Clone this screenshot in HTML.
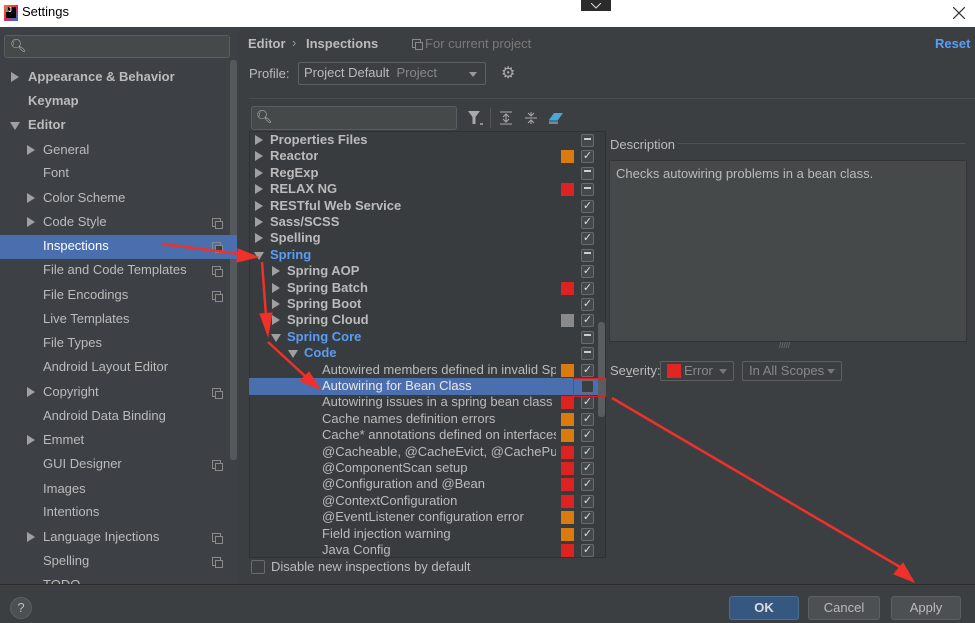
<!DOCTYPE html>
<html><head><meta charset="utf-8"><style>
*{margin:0;padding:0;box-sizing:border-box}
body{width:975px;height:623px;overflow:hidden;background:#3c3f41;font-family:"Segoe UI","Liberation Sans",sans-serif;font-size:13px;color:#bbbbbb;position:relative}
.a{position:absolute;white-space:nowrap}
.tri{position:absolute;width:0;height:0;border-top:5px solid transparent;border-bottom:5px solid transparent;border-left:8px solid #a0a0a0}
.tridn{position:absolute;width:0;height:0;border-left:5px solid transparent;border-right:5px solid transparent;border-top:8px solid #a0a0a0}
.cb{position:absolute;width:13px;height:13px;border:1px solid #6b6b6b;background:#43494a;border-radius:2px;color:#ddd;font-size:11px;line-height:11px;text-align:center}
.sq{position:absolute;width:13px;height:13px}
.cp{position:absolute;width:9px;height:9px;border:1px solid #8a8a8a}
.cp:after{content:"";position:absolute;left:2px;top:2px;width:6px;height:6px;border:1px solid #8a8a8a;background:#3c3f41}
.btn{position:absolute;height:24px;border:1px solid #5e6060;background:#4c5052;border-radius:3px;text-align:center;line-height:22px;color:#bbb}
</style></head><body>
<!-- title bar -->
<div class="a" style="left:0;top:0;width:975px;height:27px;background:#fff"></div>
<div class="a" style="left:4px;top:5px;width:14px;height:16px;background:linear-gradient(135deg,#f97a12,#e5294f 50%,#087cfa);"></div>
<div class="a" style="left:6px;top:7px;width:10px;height:11px;background:#000;color:#fff;font-size:7px;font-weight:bold;line-height:8px">IJ</div>
<div class="a" style="left:22px;top:4px;color:#000;font-size:13px">Settings</div>
<div class="a" style="left:581px;top:0;width:30px;height:11px;background:#2b2b2b"></div>
<svg class="a" style="left:591px;top:3px" width="10" height="6"><path d="M0 0L5 5L10 0" stroke="#ddd" fill="none"/></svg>
<svg class="a" style="left:953px;top:7px" width="12" height="12"><path d="M0 0L12 12M12 0L0 12" stroke="#333" stroke-width="1.2"/></svg>
<!-- sidebar -->
<div class="a" style="left:0;top:27px;width:239px;height:558px;background:#3d4146"></div>
<div class="a" style="left:230px;top:60px;width:7px;height:400px;background:#56595c;border-radius:3px"></div>
<div class="a" style="left:4px;top:35px;width:226px;height:23px;border:1px solid #5b5e60;border-radius:3px;background:#45494a"></div>
<div class="a" style="left:10px;top:38px;color:#bbb;font-size:13px">&#x1F50D;&#xFE0E;</div>
<div class="a" style="left:0;top:235px;width:237px;height:24px;background:#4b6eaf"></div>
<div id="side"></div>
<!-- main header -->
<div class="a" style="left:248px;top:36px;font-weight:bold;color:#bbb">Editor</div>
<div class="a" style="left:292px;top:35px;color:#999">›</div>
<div class="a" style="left:306px;top:36px;font-weight:bold;color:#bbb">Inspections</div>
<div class="cp" style="left:412px;top:39px"></div>
<div class="a" style="left:425px;top:36px;color:#7a7a7a">For current project</div>
<div class="a" style="left:935px;top:36px;color:#589df6;font-weight:bold">Reset</div>
<div class="a" style="left:249px;top:66px;color:#bbb">Profile:</div>
<div class="a" style="left:298px;top:62px;width:188px;height:23px;border:1px solid #5e6060;border-radius:2px;background:#3c3f41"></div>
<div class="a" style="left:304px;top:65px;color:#bbb">Project Default <span style="color:#888">&nbsp;Project</span></div>
<div class="a" style="left:469px;top:72px;border-left:4px solid transparent;border-right:4px solid transparent;border-top:5px solid #999;width:0;height:0"></div>
<div class="a" style="left:501px;top:63px;color:#aaa;font-size:16px">⚙</div>
<div class="a" style="left:249px;top:98px;width:726px;height:1px;background:#4a4d4f"></div>
<!-- tree toolbar -->
<div class="a" style="left:251px;top:106px;width:206px;height:24px;border:1px solid #5b5e60;border-radius:3px;background:#45494a"></div>
<div class="a" style="left:256px;top:109px;color:#bbb">&#x1F50D;&#xFE0E;</div>
<svg class="a" style="left:467px;top:109px" width="16" height="18"><path d="M1 2H13L8.5 8V15L5.5 15V8Z" fill="#aaa"/><path d="M13 15h3" stroke="#ddd"/></svg>
<div class="a" style="left:490px;top:108px;width:1px;height:20px;background:#555"></div>
<svg class="a" style="left:499px;top:111px" width="14" height="14"><path d="M1 1H13M1 13H13M7 3V11M4 6L7 3L10 6M4 8L7 11L10 8" stroke="#aaa" fill="none"/></svg>
<svg class="a" style="left:524px;top:111px" width="14" height="14"><path d="M1 7H13M7 1V5M7 9V13M4 2L7 5L10 2M4 12L7 9L10 12" stroke="#aaa" fill="none"/></svg>
<svg class="a" style="left:548px;top:110px" width="16" height="14"><path d="M1 10L6 3H15L10 10Z" fill="#4aa8d8"/><path d="M1 10H10L10 12H1Z" fill="#2d7ea8"/><path d="M1 13H10" stroke="#ccc"/></svg>
<!-- tree -->
<div class="a" style="left:249px;top:131px;width:357px;height:427px;background:#393c3e;border:1px solid #2f3133"></div>
<div class="a" style="left:598px;top:322px;width:7px;height:95px;background:#5a5d5f;border-radius:3px"></div>
<div class="a" style="left:249px;top:378px;width:349px;height:17px;background:#4b6eaf"></div>
<div id="tree"></div>
<div class="a" style="left:573px;top:378px;width:33px;height:19px;border:1px solid #e02020"></div>
<!-- disable -->
<div class="cb" style="left:251px;top:560px;width:14px;height:14px;background:#3c3f41"></div>
<div class="a" style="left:271px;top:559px;color:#bbb">Disable new inspections by default</div>
<!-- description -->
<div class="a" style="left:610px;top:137px;color:#bbb">Description</div>
<div class="a" style="left:678px;top:143px;width:288px;height:1px;background:#4f5254"></div>
<div class="a" style="left:609px;top:160px;width:358px;height:182px;background:#45494a;border:1px solid #333"></div>
<div class="a" style="left:616px;top:166px;color:#bbb">Checks autowiring problems in a bean class.</div>
<div class="a" style="left:779px;top:341px;color:#777;font-size:8px">/////</div>
<div class="a" style="left:610px;top:363px;color:#bbb">Se<u>v</u>erity:</div>
<div class="a" style="left:660px;top:361px;width:74px;height:20px;border:1px solid #5e6060;border-radius:2px"></div>
<div class="a" style="left:667px;top:364px;width:14px;height:14px;background:#e02525"></div>
<div class="a" style="left:684px;top:363px;color:#888">Error</div>
<div class="a" style="left:719px;top:369px;border-left:4px solid transparent;border-right:4px solid transparent;border-top:5px solid #777"></div>
<div class="a" style="left:742px;top:361px;width:100px;height:20px;border:1px solid #5e6060;border-radius:2px"></div>
<div class="a" style="left:749px;top:363px;color:#888">In All Scopes</div>
<div class="a" style="left:827px;top:369px;border-left:4px solid transparent;border-right:4px solid transparent;border-top:5px solid #777"></div>
<!-- bottom bar -->
<div class="a" style="left:0;top:584px;width:975px;height:1px;background:#2b2b2b"></div>
<div class="a" style="left:0;top:585px;width:975px;height:38px;background:#3c3f41"></div>
<div class="a" style="left:10px;top:597px;width:22px;height:22px;border-radius:11px;background:#4c5052;border:1px solid #5e6060;text-align:center;line-height:20px;color:#bbb">?</div>
<div class="btn" style="left:729px;top:596px;width:70px;background:#365880;border-color:#4c708c;color:#ddd;font-weight:bold">OK</div>
<div class="btn" style="left:808px;top:596px;width:72px">Cancel</div>
<div class="btn" style="left:891px;top:596px;width:70px">Apply</div>
<!-- arrows -->
<svg class="a" style="left:0;top:0" width="975" height="623">
<g fill="#f0302a" stroke="#f0302a">
<path d="M162 244L240 254" stroke-width="2.5"/><path d="M258 257L238 249L237 262Z"/>
<path d="M262 262L266 316" stroke-width="2.5"/><path d="M268 336L260 314L272 313Z"/>
<path d="M268 342L305 376" stroke-width="2.5"/><path d="M320 389L300 381L309 372Z"/>
<path d="M612 398L900 567" stroke-width="2.5"/><path d="M914 582L894 574L903 563Z"/>
</g></svg>
<script>
var side=[["Appearance & Behavior",77,1,1,0],["Keymap",101,0,1,0],["Editor",125,2,1,0],["General",150,1,0,0],["Font",173,0,0,0],["Color Scheme",198,1,0,0],["Code Style",222,1,0,1],["Inspections",246,0,0,1],["File and Code Templates",270,0,0,1],["File Encodings",295,0,0,1],["Live Templates",319,0,0,0],["File Types",343,0,0,0],["Android Layout Editor",367,0,0,0],["Copyright",392,1,0,1],["Android Data Binding",416,0,0,0],["Emmet",440,1,0,0],["GUI Designer",464,0,0,1],["Images",489,0,0,0],["Intentions",512,0,0,0],["Language Injections",537,1,0,1],["Spelling",561,0,0,1],["TODO",585,0,0,0]];
var h="";
side.forEach(function(s){var top=s[3],x=top?28:43,y=s[1]-8;
if(s[2]==1)h+='<div class="tri" style="left:'+(top?11:27)+'px;top:'+(y+3)+'px"></div>';
if(s[2]==2)h+='<div class="tridn" style="left:'+(top?10:26)+'px;top:'+(y+5)+'px"></div>';
h+='<div class="a" style="left:'+x+'px;top:'+y+'px;color:'+(s[1]==246?'#fff':'#bbb')+';'+(top?'font-weight:bold':'')+'">'+s[0].replace('&','&amp;')+'</div>';
if(s[4])h+='<div class="cp" style="left:212px;top:'+(y+4)+'px"></div>';});
document.getElementById('side').innerHTML=h;
var O='#d97b0f',R='#dd2222',G='#8a8a8a';
var t=[["Properties Files",0,1,"",'m'],["Reactor",0,1,O,'c'],["RegExp",0,1,"",'m'],["RELAX NG",0,1,R,'m'],["RESTful Web Service",0,1,"",'c'],["Sass/SCSS",0,1,"",'c'],["Spelling",0,1,"",'c'],["Spring",0,2,"",'m'],["Spring AOP",1,1,"",'c'],["Spring Batch",1,1,R,'c'],["Spring Boot",1,1,"",'c'],["Spring Cloud",1,1,G,'c'],["Spring Core",1,2,"",'m'],["Code",2,2,"",'m'],["Autowired members defined in invalid Spr",3,0,O,'c'],["Autowiring for Bean Class",3,0,"",'e'],["Autowiring issues in a spring bean class co",3,0,R,'c'],["Cache names definition errors",3,0,O,'c'],["Cache* annotations defined on interfaces/",3,0,O,'c'],["@Cacheable, @CacheEvict, @CachePut, @",3,0,R,'c'],["@ComponentScan setup",3,0,R,'c'],["@Configuration and @Bean",3,0,R,'c'],["@ContextConfiguration",3,0,R,'c'],["@EventListener configuration error",3,0,O,'c'],["Field injection warning",3,0,O,'c'],["Java Config",3,0,R,'c']];
h="";
t.forEach(function(r,i){var y=140+i*16.4-8,lv=r[1],ax=255+lv*17,tx=lv==3?322:270+lv*17;
var blue=(r[2]==2&&lv>0)||r[0]=="Spring";
if(r[2]==1)h+='<div class="tri" style="left:'+ax+'px;top:'+(y+3)+'px"></div>';
if(r[2]==2)h+='<div class="tridn" style="left:'+(ax-1)+'px;top:'+(y+5)+'px"></div>';
var col=blue?'#589df6':(i==15?'#e8e8e8':'#bbb');
h+='<div class="a" style="left:'+tx+'px;top:'+y+'px;color:'+col+';'+(r[2]?'font-weight:bold':'')+';max-width:'+(556-tx)+'px;overflow:hidden;height:16px">'+r[0]+'</div>';
if(r[3])h+='<div class="sq" style="left:561px;top:'+(y+2)+'px;background:'+r[3]+'"></div>';
var c=r[4]=='c'?'✓':(r[4]=='m'?'<span style="display:inline-block;width:7px;height:2px;background:#ccc;vertical-align:middle;margin-top:-3px"></span>':'');
h+='<div class="cb" style="left:581px;top:'+(y+2)+'px;'+(i==15?'background:#3c3f41':'')+'">'+c+'</div>';});
document.getElementById('tree').innerHTML=h;
</script>
</body></html>
